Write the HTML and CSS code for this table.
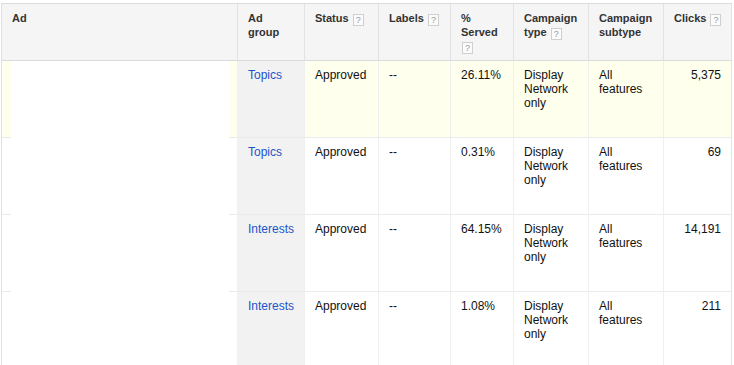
FILE: index.html
```html
<!DOCTYPE html>
<html>
<head>
<meta charset="utf-8">
<link rel="stylesheet" href="styles.css">
</head>
<body>
<div class="grid">
  <div class="row head">
    <div class="cell">Ad</div>
    <div class="cell">Ad<br>group</div>
    <div class="cell">Status <span class="help">?</span></div>
    <div class="cell">Labels <span class="help">?</span></div>
    <div class="cell">%<br>Served<br><span class="help">?</span></div>
    <div class="cell">Campaign<br>type <span class="help">?</span></div>
    <div class="cell">Campaign<br>subtype</div>
    <div class="cell">Clicks <span class="help">?</span></div>
  </div>
  <div class="row body hl">
    <div class="cell ad"><div class="preview"></div></div>
    <div class="cell grp"><a href="#">Topics</a></div>
    <div class="cell">Approved</div>
    <div class="cell">--</div>
    <div class="cell">26.11%</div>
    <div class="cell">Display<br>Network<br>only</div>
    <div class="cell">All<br>features</div>
    <div class="cell num">5,375</div>
  </div>
  <div class="row body">
    <div class="cell ad"><div class="preview"></div></div>
    <div class="cell grp"><a href="#">Topics</a></div>
    <div class="cell">Approved</div>
    <div class="cell">--</div>
    <div class="cell">0.31%</div>
    <div class="cell">Display<br>Network<br>only</div>
    <div class="cell">All<br>features</div>
    <div class="cell num">69</div>
  </div>
  <div class="row body">
    <div class="cell ad"><div class="preview"></div></div>
    <div class="cell grp"><a href="#">Interests</a></div>
    <div class="cell">Approved</div>
    <div class="cell">--</div>
    <div class="cell">64.15%</div>
    <div class="cell">Display<br>Network<br>only</div>
    <div class="cell">All<br>features</div>
    <div class="cell num">14,191</div>
  </div>
  <div class="row body">
    <div class="cell ad"><div class="preview"></div></div>
    <div class="cell grp"><a href="#">Interests</a></div>
    <div class="cell">Approved</div>
    <div class="cell">--</div>
    <div class="cell">1.08%</div>
    <div class="cell">Display<br>Network<br>only</div>
    <div class="cell">All<br>features</div>
    <div class="cell num">211</div>
  </div>
</div>
</body>
</html>
```
FILE: styles.css
```css
html, body {
  margin: 0;
  padding: 0;
  background: #fff;
  overflow: hidden;
}
body {
  font-family: "Liberation Sans", Arial, sans-serif;
  font-size: 12px;
  line-height: 14px;
  color: #222;
}
.grid {
  margin: 3px 0 0 1px;
  width: 731px;
  box-sizing: border-box;
  border-left: 1px solid #e0e0e0;
  border-top: 1px solid #dcdcdc;
}
.row {
  display: grid;
  grid-template-columns: 236px 67px 74px 72px 63px 75px 75px 68px;
}
.cell {
  box-sizing: border-box;
  padding: 7px 10px 0 10px;
  border-right: 1px solid #f0f0f0;
  border-bottom: 1px solid #ebebeb;
}
.head .cell {
  background: #f5f5f5;
  height: 57px;
  padding-right: 2px;
  font-size: 11px;
  font-weight: bold;
  color: #333;
  white-space: nowrap;
  border-right-color: #e2e2e2;
  border-bottom-color: #dadada;
}
.head .cell:last-child,
.body .cell:last-child {
  border-right-color: #e4e4e4;
}
.body .cell {
  height: 77px;
  color: #111;
}
.body.hl .cell {
  background: #ffffee;
}
.body .cell.grp {
  background: #f2f2f2;
}
.body .cell.ad {
  padding: 0 8px 0 9px;
  border-bottom: none;
  background-color: #fff;
  background-image: linear-gradient(#ebebeb, #ebebeb), linear-gradient(#ebebeb, #ebebeb);
  background-size: 9px 1px, 8px 1px;
  background-position: left bottom, right bottom;
  background-repeat: no-repeat;
}
.body.hl .cell.ad {
  background-color: #ffffee;
}
.preview {
  background: #fff;
  height: 100%;
}
.num {
  text-align: right;
}
a {
  color: #1a55cc;
  text-decoration: none;
}
.help {
  display: inline-block;
  box-sizing: border-box;
  width: 11px;
  height: 12px;
  margin-left: 1px;
  border: 1px solid #cfcfcf;
  background: #fbfbfb;
  color: #9a9a9a;
  font-size: 9px;
  font-weight: normal;
  line-height: 10px;
  text-align: center;
  vertical-align: -1px;
}
```
